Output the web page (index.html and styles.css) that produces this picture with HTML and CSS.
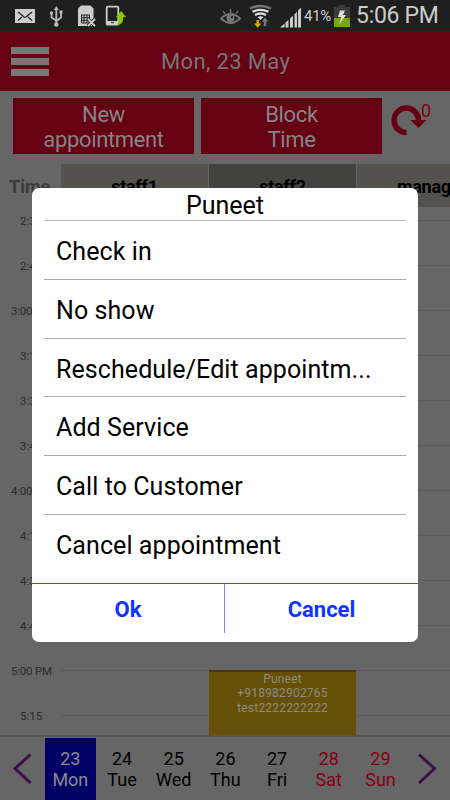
FILE: index.html
```html
<!DOCTYPE html>
<html lang="en">
<head>
<meta charset="utf-8">
<title>Appointments</title>
<link rel="stylesheet" href="styles.css">
</head>
<body>
<div class="phone">
  <div class="status">
    <svg class="status-left" width="130" height="31" viewBox="0 0 130 31">
      <rect x="15" y="9" width="20" height="14" fill="#ccc"/>
      <path d="M18 12l6 5q1 .7 2 0l6-5M18 20.500l4-3.500M32 20.500l-4-3.500" fill="none" stroke="#222" stroke-width="1.200"/>
      <g fill="none" stroke="#bbb" stroke-width="1.800"><path d="M56.300 9v15M51.500 13v4.500l4.500 3M61 12v5.500l-4.500 3.500"/></g>
      <path d="M56.300 6l2.500 4h-5z" fill="#bbb"/><circle cx="56.300" cy="24.500" r="2.200" fill="#bbb"/><circle cx="51.500" cy="13" r="1.700" fill="#bbb"/><rect x="59.500" y="10.500" width="3" height="3" fill="#bbb"/>
      <path d="M78 8.500l3-3h9.500l3 3V26H78z" fill="#ccc"/>
      <path d="M81.500 15h8v8h-8zM81.500 17.700h8M81.500 20.300h8M84 15v8M87 15v8" fill="none" stroke="#222"/>
      <path d="M88 19l7 7M95 19l-7 7" stroke="#222" stroke-width="3.500"/><path d="M88 19l7 7M95 19l-7 7" stroke="#ccc" stroke-width="1.800"/>
      <rect x="106.700" y="6.700" width="11.600" height="18" rx="1" fill="none" stroke="#ccc" stroke-width="1.800"/><path d="M107 21h11v4h-11z" fill="#ccc"/><path d="M111 22.700h3" stroke="#222"/>
      <path d="M116 25.500q3-2 2.800-8.500h-3l5.400-6 4.800 6h-2.700q.5 8-7.300 8.500z" fill="#8fc400"/>
    </svg>
    <svg class="status-right" width="92" height="31" viewBox="216 0 92 31">
      <path d="M221 18.500q9.500-9 19 0-9.500 9-19 0z" fill="none" stroke="#777" stroke-width="1.800"/><circle cx="230.500" cy="18" r="4" fill="#777"/><circle cx="232" cy="17" r="1.200" fill="#222"/><path d="M230.500 9v4M223 11l2 3M238 11l-2 3" stroke="#777" stroke-width="1.300"/>
      <g fill="none" stroke-width="2.300"><path d="M250 8.500q10.500-5 21 0" stroke="#777"/><path d="M252.500 11.800q8-4 16 0M255 15q5.500-3 11 0" stroke="#ddd"/></g><path d="M257.500 17q3-1.500 6 0l-3 3z" fill="#ddd"/>
      <path d="M256.500 20h2.500v3.500h2.500l-3.800 4.200-3.700-4.200h2.500z" fill="#d9a600"/><path d="M263.700 26v-4.500h-2l3.300-4 3.300 4h-2V26z" fill="#777"/>
      <path d="M280 27.500l4.500-4v4zM285.500 22.600l3-2.700v7.600h-3zM290 18.500l3-2.800v11.800h-3zM294.500 14.300l2.500-2.500v15.700h-2.500zM298 10.500l3-3v20h-3z" fill="#ccc"/>
    </svg>
    <span class="percent">41%</span>
    <svg class="battery" width="16" height="22" viewBox="0 0 16 22"><path d="M0 2h5V0h6v2h5v20H0z" fill="#3b3b3b"/><path d="M0 13h16v9H0z" fill="#76a900"/><path d="M6 5.500h5L9 10h3l-6.500 9 1.500-7H4z" fill="#ddd"/></svg>
    <span class="clock">5:06 PM</span>
  </div>
  <header class="bar">
    <div class="menu"><i></i><i></i><i></i></div>
    <span>Mon, 23 May</span>
  </header>
  <div class="actions">
    <div class="btn">New<br>appointment</div>
    <div class="btn">Block<br>Time</div>
    <svg class="refresh" width="36" height="34" viewBox="390 103 36 34"><path d="M406.500 132.500a12.200 12.200 0 1 1 12-12" fill="none" stroke="#660013" stroke-width="5.500"/><path d="M410.500 120h16l-8 8z" fill="#660013"/></svg>
    <span class="count">0</span>
  </div>
  <div class="staff">
    <div class="time-head">Time</div>
    <div class="col">staff1</div>
    <div class="col dark">staff2</div>
    <div class="col third">manag</div>
  </div>
  <div class="grid">
    <div class="slot"><span>2:30</span><i></i></div>
    <div class="slot"><span>2:45</span><i></i></div>
    <div class="slot hour"><span>3:00 PM</span><i></i></div>
    <div class="slot"><span>3:15</span><i></i></div>
    <div class="slot"><span>3:30</span><i></i></div>
    <div class="slot"><span>3:45</span><i></i></div>
    <div class="slot hour"><span>4:00 PM</span><i></i></div>
    <div class="slot"><span>4:15</span><i></i></div>
    <div class="slot"><span>4:30</span><i></i></div>
    <div class="slot"><span>4:45</span><i></i></div>
    <div class="slot hour"><span>5:00 PM</span><i></i></div>
    <div class="slot"><span>5:15</span><i></i></div>
    <div class="event">Puneet<br>+918982902765<br>test2222222222</div>
  </div>
  <div class="days">
    <svg width="44.500" height="62" viewBox="0 0 44.500 62"><path d="M30.500 16.500L15 30.500l15.500 14.500" fill="none" stroke="#3c0f4a" stroke-width="3"/></svg>
    <div class="day on">23<br>Mon</div>
    <div class="day">24<br>Tue</div>
    <div class="day">25<br>Wed</div>
    <div class="day">26<br>Thu</div>
    <div class="day">27<br>Fri</div>
    <div class="day red">28<br>Sat</div>
    <div class="day red">29<br>Sun</div>
    <svg width="43" height="62" viewBox="407 0 43 62"><path d="M420 16.500l15.500 14-15.500 14.500" fill="none" stroke="#3c0f4a" stroke-width="3"/></svg>
  </div>
  <div class="dialog">
    <div class="title">Puneet</div>
    <div class="item">Check in</div>
    <div class="item">No show</div>
    <div class="item">Reschedule/Edit appointm...</div>
    <div class="item">Add Service</div>
    <div class="item">Call to Customer</div>
    <div class="item last">Cancel appointment</div>
    <div class="buttons"><div class="choice">Ok</div><div class="choice">Cancel</div></div>
  </div>
</div>
</body>
</html>
```
FILE: styles.css
```css
* { box-sizing: border-box; }
body { margin: 0; font-family: Roboto, "Liberation Sans", sans-serif; }
.phone { position: relative; display: flex; flex-direction: column; width: 450px; height: 800px; overflow: hidden; background: #666; }
svg { display: block; flex: none; }
.status { display: flex; height: 31px; flex: none; background: #1f1f1f; color: #ccc; white-space: nowrap; }
.status-right { margin-left: 86px; }
.percent { width: 26px; margin-left: -4px; font-size: 15px; line-height: 33px; letter-spacing: -0.3px; }
.battery { margin: 5px 0 0 4px; }
.clock { margin-left: 6px; font-size: 23px; line-height: 32px; letter-spacing: -0.3px; }
.bar { display: flex; align-items: center; flex: none; height: 60px; background: #660013; color: #777; font-size: 22px; letter-spacing: 0.35px; }
.menu { display: flex; flex-direction: column; gap: 4px; width: 38px; margin: 0 112px 0 11px; }
.menu i { height: 7px; background: #777; }
.bar span { line-height: 60px; padding-top: 2px; }
.actions { display: flex; flex: none; height: 73px; padding: 7px 0 0 13px; gap: 7px; }
.btn { width: 181px; height: 56px; padding-top: 4px; background: #660013; color: #858585; text-align: center; font-size: 22px; line-height: 25px; letter-spacing: -0.35px; }
.refresh { margin: 5px 0 0 1px; }
.count { margin-left: -12px; color: #850010; font-size: 18px; line-height: 25px; }
.staff { display: flex; flex: none; height: 43px; font-size: 18px; font-weight: 700; line-height: 45px; white-space: nowrap; }
.time-head { width: 61px; flex: none; padding-left: 9px; color: #3b3b3b; }
.col { width: 148px; flex: none; background: #53524f; border-right: 1px solid #666; text-align: center; color: #000; letter-spacing: -0.3px; }
.dark { background: #424340; }
.third { width: 93px; border: 0; padding-left: 40px; text-align: left; }
.grid { position: relative; flex: none; height: 530px; overflow: hidden; border-bottom: 2px solid #555; }
.slot { display: flex; height: 45px; color: #2b2b2b; font-size: 11.500px; }
.slot span { width: 61px; flex: none; padding-left: 20px; line-height: 28px; }
.slot.hour span { padding-left: 11px; letter-spacing: -0.2px; }
.slot i { flex: 1; margin-top: 13px; border-top: 1px solid #5b5b5b; }
.event { position: absolute; left: 209px; top: 463px; width: 147px; height: 70px; background: #665006; border-top: 2px solid #4b3900; color: #8c8c83; font-size: 12px; line-height: 14.400px; text-align: center; letter-spacing: 0.2px; }
.days { display: flex; flex: none; height: 63px; padding-top: 1px; font-size: 18px; line-height: 20.500px; text-align: center; }
.day { width: 51.700px; padding-top: 11px; color: #000; }
.on { background: #000066; color: #8b8b8b; }
.red { color: #850010; }
.dialog { position: absolute; left: 32px; top: 188px; width: 386px; height: 454px; background: #fff; border-radius: 7px; color: #000; }
.title { height: 33px; margin: 0 12px; border-bottom: 1px solid #bbb; text-align: center; font-size: 25px; line-height: 36px; }
.item { height: 58.800px; margin: 0 12px; padding-left: 12px; border-bottom: 1px solid #aaa; font-size: 25px; line-height: 61px; white-space: nowrap; letter-spacing: 0.08px; }
.last { height: 68px; border: 0; }
.buttons { display: flex; height: 50px; border-top: 1px solid #3c4de0; }
.choice { width: 50%; text-align: center; color: #0c35ff; font-size: 22px; font-weight: 700; line-height: 52px; }
.choice:first-child { border-right: 1px solid #8088f0; }
```
